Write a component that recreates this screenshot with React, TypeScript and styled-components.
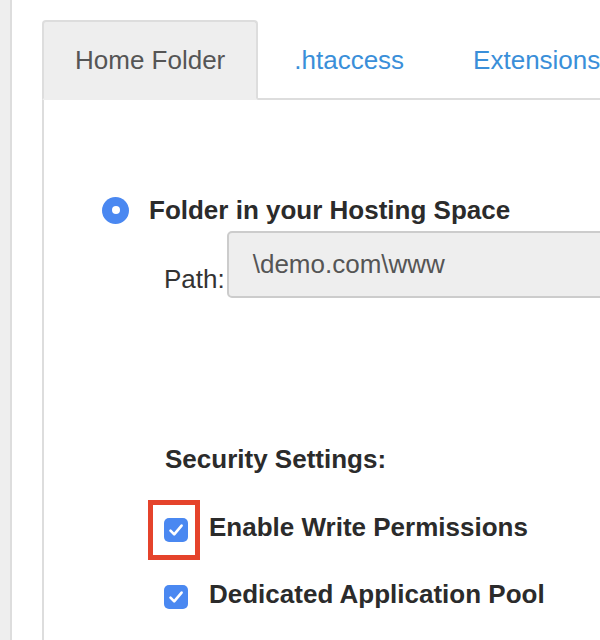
import React from 'react';
import styled, { createGlobalStyle } from 'styled-components';

const GlobalStyle = createGlobalStyle`
	html, body {
		margin: 0;
		padding: 0;
		background: #fff;
		overflow: hidden;
	}

	body {
		font-family: 'Liberation Sans', Arial, Helvetica, sans-serif;
		color: #333;
	}
`;

const tabs = [
	{ id: 'home', label: 'Home Folder', active: true },
	{ id: 'htaccess', label: '.htaccess', active: false },
	{ id: 'extensions', label: 'Extensions', active: false },
];

const permissions = [
	{ id: 'write', label: 'Enable Write Permissions', highlighted: true },
	{ id: 'pool', label: 'Dedicated Application Pool', highlighted: false },
];

const CheckIcon: React.FC = () => (
	<svg width="24" height="24" viewBox="0 0 24 24">
		<rect x="0" y="0" width="24" height="24" rx="5" fill="#4a88f1" />
		<polyline
			points="6.5,12.6 10.2,16.4 17.6,7.6"
			fill="none"
			stroke="#fff"
			strokeWidth="2.6"
			strokeLinecap="round"
			strokeLinejoin="round"
		/>
	</svg>
);

const App: React.FC = () => (
	<>
		<GlobalStyle />
		<Page>
			<SideStrip />
			<Content>
				<TabBar>
					{tabs.map(t => (
						<Tab key={t.id} $active={t.active}>{t.label}</Tab>
					))}
				</TabBar>
				<Panel>
					<RadioRow>
						<Radio />
						<RadioLabel>{'Folder in your Hosting Space'}</RadioLabel>
					</RadioRow>
					<PathRow>
						<PathLabel>{'Path:'}</PathLabel>
						<PathInput>{'\\demo.com\\www'}</PathInput>
					</PathRow>
					<SecurityTitle>{'Security Settings:'}</SecurityTitle>
					<CheckList>
						{permissions.map(p => (
							<CheckRow key={p.id}>
								<CheckBox>
									<CheckIcon />
									{p.highlighted && <Highlight />}
								</CheckBox>
								<CheckLabel>{p.label}</CheckLabel>
							</CheckRow>
						))}
					</CheckList>
				</Panel>
			</Content>
		</Page>
	</>
);

const Page = styled.div`
	display: flex;
	width: 600px;
	height: 640px;
	overflow: hidden;
`;

const SideStrip = styled.div`
	flex: 0 0 10px;
	background: #eee;
	border-right: 2px solid #ddd;
`;

const Content = styled.div`
	flex: 1;
	display: flex;
	flex-direction: column;
	padding: 20px 0 0 30px;
	min-width: 0;
`;

const TabBar = styled.div`
	display: flex;
	border-bottom: 2px solid #ddd;
	white-space: nowrap;
`;

const Tab = styled.div<{ $active: boolean }>`
	display: flex;
	align-items: center;
	flex-shrink: 0;
	height: 76px;
	padding: 0 31px;
	margin: 0 3px -2px 0;
	font-size: 26px;
	border: 2px solid ${p => p.$active ? '#ddd' : 'transparent'};
	border-bottom-color: ${p => p.$active ? '#eee' : 'transparent'};
	border-radius: 4px 4px 0 0;
	background: ${p => p.$active ? '#eee' : 'transparent'};
	color: ${p => p.$active ? '#555' : '#3a8fd9'};
`;

const Panel = styled.div`
	flex: 1;
	border-left: 2px solid #ddd;
	padding-left: 58px;
`;

const RadioRow = styled.div`
	display: flex;
	align-items: center;
	gap: 20px;
	margin-top: 95px;
	height: 30px;
`;

const Radio = styled.div`
	flex: 0 0 27px;
	height: 27px;
	border-radius: 50%;
	background: #4a88f1;
	display: flex;
	align-items: center;
	justify-content: center;

	&::after {
		content: '';
		width: 8px;
		height: 8px;
		border-radius: 50%;
		background: #fff;
	}
`;

const RadioLabel = styled.div`
	font-size: 26px;
	line-height: 30px;
	font-weight: bold;
	color: #2b2b2b;
	white-space: nowrap;
`;

const PathRow = styled.div`
	display: flex;
	align-items: flex-end;
	gap: 2px;
	margin: 6px 0 0 62px;
`;

const PathLabel = styled.div`
	font-size: 26px;
	line-height: 30px;
	padding-bottom: 4px;
	color: #333;
`;

const PathInput = styled.div`
	flex: 0 0 480px;
	height: 63px;
	display: flex;
	align-items: center;
	padding-left: 24px;
	background: #eee;
	border: 2px solid #ccc;
	border-radius: 5px;
	font-size: 26px;
	color: #555;
`;

const SecurityTitle = styled.div`
	margin: 146px 0 0 63px;
	font-size: 26px;
	line-height: 30px;
	font-weight: bold;
	color: #2b2b2b;
`;

const CheckList = styled.div`
	display: flex;
	flex-direction: column;
	gap: 37px;
	margin: 38px 0 0 62px;
`;

const CheckRow = styled.div`
	display: flex;
	align-items: flex-start;
	gap: 21px;
	height: 30px;
`;

const CheckBox = styled.div`
	position: relative;
	flex: 0 0 24px;
	height: 24px;
	margin-top: 6px;
`;

const Highlight = styled.div`
	position: absolute;
	top: -18px;
	bottom: -18px;
	left: -16px;
	right: -12px;
	border: 5px solid #e5432b;
`;

const CheckLabel = styled.div`
	font-size: 26px;
	line-height: 30px;
	font-weight: bold;
	color: #2b2b2b;
	white-space: nowrap;
`;

export default App;
